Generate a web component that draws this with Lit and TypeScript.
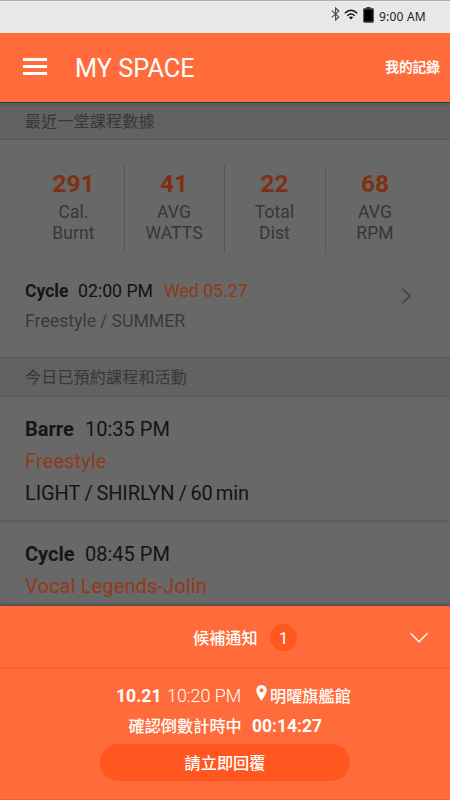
import { LitElement, html, css } from "lit";
import { customElement } from "lit/decorators.js";

interface Stat { value: string; top: string; bottom: string; }

const STATS: Stat[] = [
  { value: "291", top: "Cal.", bottom: "Burnt" },
  { value: "41", top: "AVG", bottom: "WATTS" },
  { value: "22", top: "Total", bottom: "Dist" },
  { value: "68", top: "AVG", bottom: "RPM" },
];

@customElement("status-bar")
class StatusBar extends LitElement {
  static styles = css`
    :host { display: flex; box-sizing: border-box; height: 33px; background: #e8e8e8; border-top: 1px solid #adadad;
      justify-content: flex-end; padding-right: 24px; color: #222; }
    svg { display: block; flex: none; }
    .bt { margin: 6px 4px 0 0; }
    .wifi { margin: 8px 5px 0 0; }
    .battery { margin: 6px 5px 0 0; }
    .time { font-size: 12px; line-height: 31px; width: 47px; letter-spacing: 0.2px; white-space: nowrap; font-family: "Noto Sans", Roboto, sans-serif; }
  `;
  render() {
    return html`
      <svg class="bt" width="9" height="14" viewBox="0 0 9 14" fill="none" stroke="#444" stroke-width="1.1"><path d="M.8 3.600 7.800 9.900 4.600 13V1L7.800 4.100.8 10.400"/></svg>
      <svg class="wifi" width="14" height="11" viewBox="0 0 14 11" fill="none" stroke="#111" stroke-width="1.5"><path d="M.8 4.2Q7-1.6 13.2 4.2M3.2 6.7Q7 3.4 10.8 6.7"/><path d="M4.8 8.1Q7 6.7 9.2 8.1L7 10.4Z" fill="#111" stroke="none"/></svg>
      <svg class="battery" width="11" height="16" viewBox="0 0 11 16"><path d="M3.5 0h4v1.3h2.2q1.1 0 1.1 1.1v12.2q0 1.1-1.1 1.1H1.3Q.2 15.7.2 14.600V2.400Q.2 1.300 1.300 1.300h2.200Z" fill="#333"/><path d="M1.300 2.800h8.400v11.200H1.300Z" fill="#000"/></svg>
      <span class="time">9:00 AM</span>`;
  }
}

@customElement("title-bar")
class TitleBar extends LitElement {
  static styles = css`
    :host { display: flex; box-sizing: border-box; height: 70px; background: #ff6b3a; border-bottom: 1px solid #154444;
      align-items: center; padding: 0 10px 0 23px; color: #fff; }
    .menu { width: 24px; height: 17px; display: flex; flex-direction: column; justify-content: space-between; margin-right: 28px; margin-top: -2px; }
    .bar { height: 3px; background: #fff; }
    .title { font-size: 25.300px; line-height: 30px; flex: 1; margin-top: 2px; letter-spacing: 0; }
    .link { font-size: 13.700px; line-height: 20px; font-weight: 700; font-family: "Noto Sans CJK TC", sans-serif; margin-top: -3px; }
  `;
  render() {
    return html`
      <div class="menu"><div class="bar"></div><div class="bar"></div><div class="bar"></div></div>
      <div class="title">MY SPACE</div>
      <div class="link">我的記錄</div>`;
  }
}

@customElement("section-heading")
class SectionHeading extends LitElement {
  static styles = css`
    :host { display: block; box-sizing: border-box; padding-left: 25px; background: #626262; border-bottom: 1px solid #595959;
      color: #373737; font-family: "Noto Sans CJK TC", sans-serif; font-size: 16px; letter-spacing: 0.2px; }
  `;
  render() { return html`<slot></slot>`; }
}

@customElement("waitlist-sheet")
class WaitlistSheet extends LitElement {
  static styles = css`
    :host { display: block; box-sizing: border-box; height: 194px; background: #ff6b3a; color: #fff;
      border-bottom: 1px solid #ff5a22; box-shadow: 0 -1px 4px rgba(0, 0, 0, 0.35); }
    .cjk { font-family: "Noto Sans CJK TC", sans-serif; font-size: 16.200px; font-weight: 500; white-space: nowrap; }
    .head { display: grid; grid-template-columns: 193px 77px 28px 1fr; align-items: center; height: 61px; border-bottom: 2px solid #ff5e29; box-sizing: content-box; }
    .head .cjk { grid-column: 2; }
    .count { width: 27px; height: 27px; border-radius: 50%; background: #ff571f; text-align: center; font-size: 17px; line-height: 28px; margin-top: 2px; }
    .arrow { justify-self: end; margin: 2px 21px 0 0; }
    .row { display: flex; height: 30px; line-height: 30px; font-size: 18px; }
    .when { padding: 12px 0 0 116px; }
    .when .cjk { line-height: 29px; }
    b { font-weight: 700; }
    .day { width: 51px; font-size: 17.600px; }
    .hour { width: 89px; font-size: 17.900px; font-weight: 300; }
    .pin { margin: 4px 3px 0 0; }
    .wait { padding-left: 128.500px; }
    .wait .cjk { width: 123.500px; line-height: 29px; }
    .wait b { font-size: 17.500px; }
    .reply { width: 250px; height: 37px; margin: 3px auto 0; border-radius: 19px; background: #ff571f; text-align: center; line-height: 37px; }
  `;
  render() {
    return html`
      <div class="head">
        <span class="cjk">候補通知</span><span class="count">1</span>
        <svg class="arrow" width="20" height="12" viewBox="0 0 20 12" fill="none" stroke="#fff" stroke-width="1.300"><path d="M1.500 1.300 10 9.800 18.500 1.300"/></svg>
      </div>
      <div class="row when">
        <b class="day">10.21</b><span class="hour">10:20 PM</span>
        <svg class="pin" width="11" height="16" viewBox="0 0 11 16"><path fill="#fff" fill-rule="evenodd" d="M5.500 0A5.200 5.200 0 0 0 .3 5.200C.3 9 5.500 15.700 5.500 15.700S10.700 9 10.700 5.200A5.200 5.200 0 0 0 5.500 0ZM5.500 3.200A2 2 0 1 1 5.500 7.200 2 2 0 1 1 5.500 3.200Z"/></svg>
        <span class="cjk">明曜旗艦館</span>
      </div>
      <div class="row wait"><span class="cjk">確認倒數計時中</span><b>00:14:27</b></div>
      <div class="reply cjk">請立即回覆</div>`;
  }
}

@customElement("app-root")
class AppRoot extends LitElement {
  static styles = css`
    :host { display: flex; flex-direction: column; width: 450px; height: 800px; overflow: hidden; background: #686868;
      font-family: Roboto, sans-serif; color: #141414; }
    .page { flex: 1; min-height: 0; overflow: hidden; }
    .latest { height: 37px; line-height: 35px; background: linear-gradient(#585858, #626262 4px); }
    .today { height: 40px; line-height: 37px; border-top: 1px solid #555; }
    .stats { display: grid; grid-template-columns: 101px 100px 101px 100px; margin: 25px 0 0 24px; height: 88px; }
    .stat { box-sizing: border-box; padding-right: 1px; border-right: 1px solid #575757; text-align: center; font-size: 17.500px; line-height: 21px; color: #373737; white-space: nowrap; letter-spacing: 0.1px; }
    .stat:last-child { border-right: 0; padding-right: 2px; }
    .value { color: #7f3013; font-size: 24.500px; font-weight: 700; line-height: 29px; height: 33px; padding-top: 4px; letter-spacing: 0; }
    .label { height: 21px; }
    .last { display: flex; height: 104px; box-sizing: border-box; padding: 23px 39px 0 25px; font-size: 17.700px; line-height: 30px; }
    .info { flex: 1; }
    .line { display: flex; white-space: pre; }
    b { font-weight: 700; color: #161616; }
    .name { width: 53px; font-size: 17.500px; }
    .at { width: 86px; color: #121212; }
    .accent { color: #923919; }
    .class .accent { letter-spacing: 0.130px; }
    .muted { color: #3a3a3a; }
    .chev { margin-top: 11px; }
    .class { height: 125px; box-sizing: border-box; padding: 16px 0 0 25px; font-size: 20px; line-height: 32px; border-bottom: 2px solid #5f5f5f; }
    .class b { width: 60px; }
    .class .line + .accent + .line { letter-spacing: -0.1px; }
    .gap { margin: 0 3.700px 0 4.300px; }
    .unit { margin-left: 3px; }
    .thin { margin: 0 4px; }
  `;
  render() {
    return html`
      <status-bar></status-bar>
      <title-bar></title-bar>
      <div class="page">
        <section-heading class="latest">最近一堂課程數據</section-heading>
        <div class="stats">
          ${STATS.map((s) => html`<div class="stat"><div class="value">${s.value}</div><div class="label">${s.top}</div><div class="label">${s.bottom}</div></div>`)}
        </div>
        <div class="last">
          <div class="info">
            <div class="line"><b class="name">Cycle</b><span class="at">02:00 PM</span><span class="accent">Wed 05.27</span></div>
            <div class="line muted">Freestyle<span class="thin">/</span>SUMMER</div>
          </div>
          <svg class="chev" width="10" height="18" viewBox="0 0 10 18" fill="none" stroke="#3a3a3a" stroke-width="1.200"><path d="M1.500 1.800 8.800 9 1.500 16.200"/></svg>
        </div>
        <section-heading class="today">今日已預約課程和活動</section-heading>
        <div class="class">
          <div class="line"><b>Barre</b><span>10:35 PM</span></div>
          <div class="accent">Freestyle</div>
          <div class="line">LIGHT<span class="gap">/</span>SHIRLYN<span class="gap">/</span>60<span class="unit">min</span></div>
        </div>
        <div class="class">
          <div class="line"><b>Cycle</b><span>08:45 PM</span></div>
          <div class="accent">Vocal Legends-Jolin</div>
        </div>
      </div>
      <waitlist-sheet></waitlist-sheet>`;
  }
}
